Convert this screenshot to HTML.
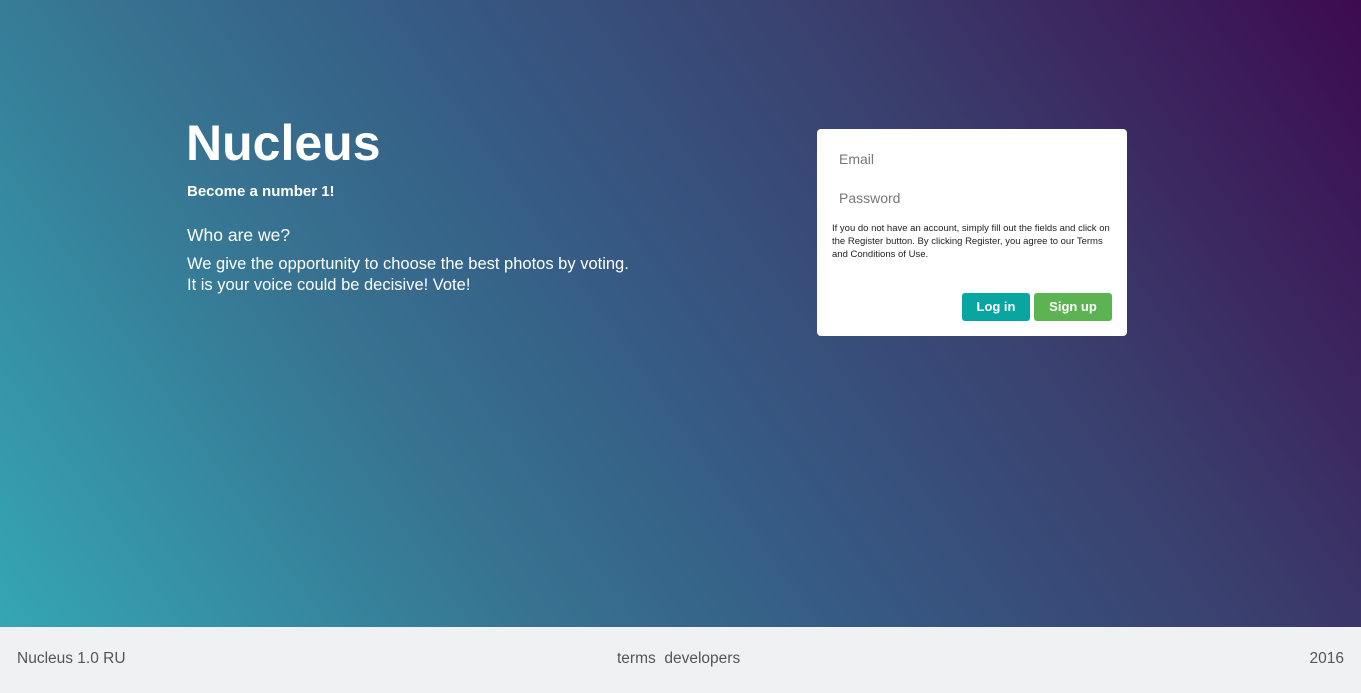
<!DOCTYPE html>
<html><head><meta charset="utf-8"><style>
html,body{margin:0;padding:0;width:1361px;height:693px;overflow:hidden;font-family:"Liberation Sans",sans-serif}
.bg{position:absolute;left:0;top:0;width:1361px;height:627px;background:linear-gradient(55deg,#35a6b4 0%,#377391 30%,#365a84 48%,#3a3f6e 70%,#3d0b50 100%)}
.t{position:absolute;color:#fff;white-space:nowrap}
.card{position:absolute;left:817px;top:129px;width:310px;height:207px;background:#fff;border-radius:4px}
.ph{position:absolute;left:22px;font-size:14px;color:#777}
.note{position:absolute;left:15px;top:93px;font-size:9.5px;line-height:13px;color:#222;width:282px}
.btn{position:absolute;top:164px;height:28px;border-radius:3px;color:#fff;font-weight:bold;font-size:13px;line-height:28px;text-align:center}
.foot{position:absolute;left:0;top:627px;width:1361px;height:66px;background:#f0f1f3;color:#555;font-size:15.5px}
</style></head><body>
<div class="bg"></div>
<div class="t" style="left:186px;top:114px;font-size:50px;font-weight:bold">Nucleus</div>
<div class="t" style="left:187px;top:183px;font-size:15px;font-weight:bold">Become a number 1!</div>
<div class="t" style="left:187px;top:225px;font-size:17.5px">Who are we?</div>
<div class="t" style="left:187px;top:254px;font-size:16.5px;line-height:21px;letter-spacing:0">We give the opportunity to choose the best photos by voting.<br>It is your voice could be decisive! Vote!</div>
<div class="card">
<div class="ph" style="top:22px">Email</div>
<div class="ph" style="top:61px">Password</div>
<div class="note">If you do not have an account, simply fill out the fields and click on the Register button. By clicking Register, you agree to our Terms and Conditions of Use.</div>
<div class="btn" style="left:145px;width:68px;background:#08a5a1">Log in</div>
<div class="btn" style="left:217px;width:78px;background:#5cb352">Sign up</div>
</div>
<div class="foot">
<span style="position:absolute;left:17px;top:23px">Nucleus 1.0 RU</span>
<span style="position:absolute;left:617px;top:23px">terms&nbsp;&nbsp;developers</span>
<span style="position:absolute;right:17px;top:23px">2016</span>
</div>
</body></html>
